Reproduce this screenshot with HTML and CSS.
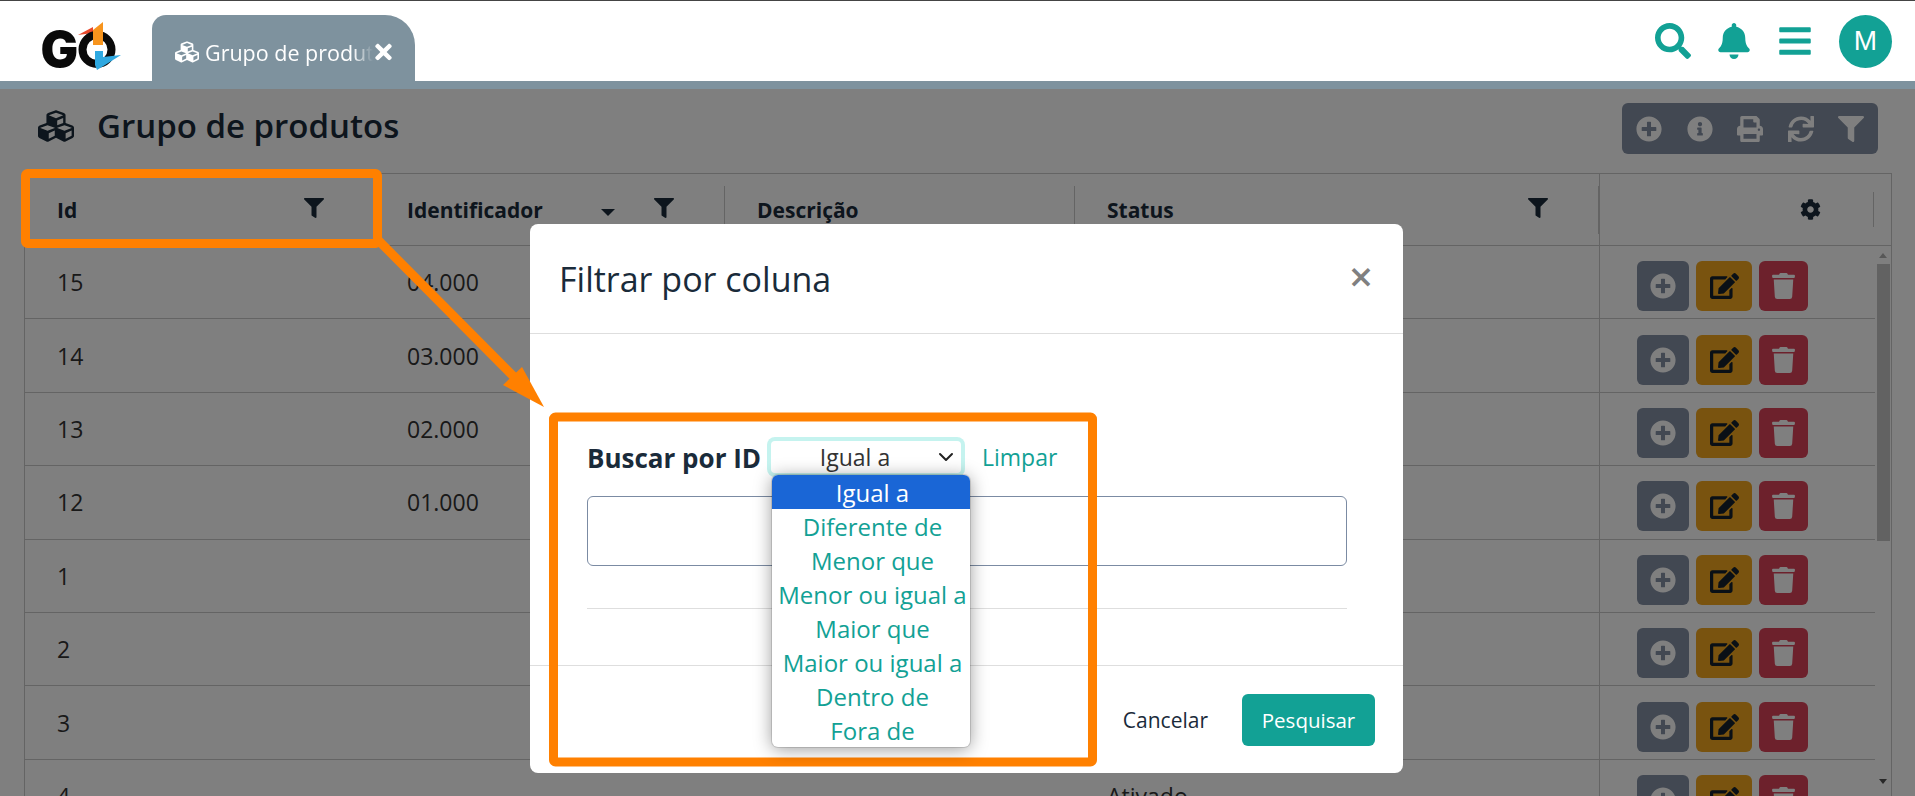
FILE: index.html
```html
<!DOCTYPE html>
<html lang="pt-BR">
<head>
    <meta charset="UTF-8">
    <meta name="viewport" content="width=device-width, initial-scale=1.0">
    <title>Grupo de produtos</title>
    <link rel="stylesheet" href="styles.css">
</head>
<body>
    <svg class="sprite" xmlns="http://www.w3.org/2000/svg">
        <symbol id="i-cubes" viewBox="0 0 512 512"><path d="M488.6 250.2L392 214V105.5c0-15-9.3-28.4-23.4-33.7l-100-37.5c-8.1-3.1-17.1-3.1-25.3 0l-100 37.5c-14.1 5.3-23.4 18.7-23.4 33.7V214l-96.6 36.2C9.3 255.5 0 268.9 0 283.9V394c0 13.6 7.7 26.1 19.9 32.2l100 50c10.1 5.1 22.1 5.1 32.2 0l103.9-52 103.9 52c10.1 5.1 22.1 5.1 32.2 0l100-50c12.2-6.1 19.9-18.6 19.9-32.2V283.9c0-15-9.3-28.4-23.4-33.7zM358 214.8l-85 31.9v-68.2l85-37v73.3zM154 104.1l102-38.2 102 38.2v.6l-102 41.4-102-41.4v-.6zm84 291.1l-85 42.5v-79.1l85-38.8v75.4zm0-112l-102 41.4-102-41.4v-.6l102-38.2 102 38.2v.6zm240 112l-85 42.5v-79.1l85-38.8v75.4zm0-112l-102 41.4-102-41.4v-.6l102-38.2 102 38.2v.6z"/></symbol>
        <symbol id="i-search" viewBox="0 0 512 512"><path d="M505 442.7L405.3 343c-4.5-4.5-10.6-7-17-7H372c27.6-35.3 44-79.7 44-128C416 93.1 322.9 0 208 0S0 93.1 0 208s93.1 208 208 208c48.3 0 92.7-16.4 128-44v16.3c0 6.4 2.5 12.5 7 17l99.7 99.7c9.4 9.4 24.6 9.4 33.9 0l28.3-28.3c9.4-9.4 9.4-24.6.1-34zM208 336c-70.7 0-128-57.2-128-128 0-70.7 57.2-128 128-128 70.7 0 128 57.2 128 128 0 70.7-57.2 128-128 128z"/></symbol>
        <symbol id="i-bell" viewBox="0 0 448 512"><path d="M224 512c35.32 0 63.97-28.65 63.97-64H160.03c0 35.35 28.65 64 63.97 64zm215.39-149.71c-19.32-20.76-55.47-51.99-55.47-154.29 0-77.7-54.48-139.9-127.94-155.16V32c0-17.67-14.32-32-31.98-32s-31.98 14.33-31.98 32v20.84C118.56 68.1 64.08 130.3 64.08 208c0 102.3-36.15 133.53-55.47 154.29-6 6.45-8.66 14.16-8.61 21.71.11 16.4 12.98 32 32.1 32h383.8c19.12 0 32-15.6 32.1-32 .05-7.55-2.61-15.27-8.61-21.71z"/></symbol>
        <symbol id="i-bars" viewBox="0 0 448 512"><path d="M16 132h416c8.837 0 16-7.163 16-16V76c0-8.837-7.163-16-16-16H16C7.163 60 0 67.163 0 76v40c0 8.837 7.163 16 16 16zm0 160h416c8.837 0 16-7.163 16-16v-40c0-8.837-7.163-16-16-16H16c-8.837 0-16 7.163-16 16v40c0 8.837 7.163 16 16 16zm0 160h416c8.837 0 16-7.163 16-16v-40c0-8.837-7.163-16-16-16H16c-8.837 0-16 7.163-16 16v40c0 8.837 7.163 16 16 16z"/></symbol>
        <symbol id="i-plus" viewBox="0 0 512 512"><path d="M256 8C119 8 8 119 8 256s111 248 248 248 248-111 248-248S393 8 256 8zm144 276c0 6.6-5.4 12-12 12h-92v92c0 6.6-5.4 12-12 12h-56c-6.6 0-12-5.4-12-12v-92h-92c-6.6 0-12-5.4-12-12v-56c0-6.6 5.4-12 12-12h92v-92c0-6.6 5.4-12 12-12h56c6.6 0 12 5.4 12 12v92h92c6.6 0 12 5.4 12 12v56z"/></symbol>
        <symbol id="i-info" viewBox="0 0 512 512"><path d="M256 8C119.043 8 8 119.083 8 256c0 136.997 111.043 248 248 248s248-111.003 248-248C504 119.083 392.957 8 256 8zm0 110c23.196 0 42 18.804 42 42s-18.804 42-42 42-42-18.804-42-42 18.804-42 42-42zm56 254c0 6.627-5.373 12-12 12h-88c-6.627 0-12-5.373-12-12v-24c0-6.627 5.373-12 12-12h12v-64h-12c-6.627 0-12-5.373-12-12v-24c0-6.627 5.373-12 12-12h64c6.627 0 12 5.373 12 12v100h12c6.627 0 12 5.373 12 12v24z"/></symbol>
        <symbol id="i-print" viewBox="0 0 512 512"><path d="M448 192V77.25c0-8.49-3.37-16.62-9.37-22.63L393.37 9.37c-6-6-14.14-9.37-22.63-9.37H96C78.33 0 64 14.33 64 32v160c-35.35 0-64 28.65-64 64v112c0 8.84 7.16 16 16 16h48v96c0 17.67 14.33 32 32 32h320c17.67 0 32-14.33 32-32v-96h48c8.84 0 16-7.16 16-16V256c0-35.35-28.65-64-64-64zm-64 256H128v-96h256v96zm0-224H128V64h192v48c0 8.84 7.16 16 16 16h48v96zm48 72c-13.25 0-24-10.75-24-24 0-13.26 10.75-24 24-24s24 10.74 24 24c0 13.25-10.75 24-24 24z"/></symbol>
        <symbol id="i-sync" viewBox="0 0 512 512"><path d="M440.65 12.57l4 82.77A247.16 247.16 0 0 0 255.83 8C134.73 8 33.91 94.92 12.29 209.82A12 12 0 0 0 24.09 224h49.05a12 12 0 0 0 11.67-9.26 175.91 175.91 0 0 1 317-56.94l-101.46-4.86a12 12 0 0 0-12.57 12v47.41a12 12 0 0 0 12 12H500a12 12 0 0 0 12-12V12a12 12 0 0 0-12-12h-47.37a12 12 0 0 0-11.98 12.57zM255.83 432a175.61 175.61 0 0 1-146-77.8l101.8 4.87a12 12 0 0 0 12.57-12v-47.4a12 12 0 0 0-12-12H12a12 12 0 0 0-12 12V500a12 12 0 0 0 12 12h47.35a12 12 0 0 0 12-12.6l-4.15-82.57A247.17 247.17 0 0 0 255.83 504c121.11 0 221.93-86.92 243.55-201.82a12 12 0 0 0-11.8-14.18h-49.05a12 12 0 0 0-11.67 9.26A175.86 175.86 0 0 1 255.83 432z"/></symbol>
        <symbol id="i-filter" viewBox="0 0 512 512"><path d="M487.976 0H24.028C2.71 0-8.047 25.866 7.058 40.971L192 225.941V432c0 7.831 3.821 15.17 10.237 19.662l80 55.98C298.02 518.69 320 507.493 320 487.98V225.941l184.947-184.97C520.021 25.896 509.338 0 487.976 0z"/></symbol>
        <symbol id="i-cog" viewBox="0 0 512 512"><path d="M487.4 315.7l-42.6-24.6c4.3-23.2 4.3-47 0-70.2l42.6-24.6c4.9-2.8 7.1-8.6 5.5-14-11.1-35.6-30-67.8-54.7-94.6-3.8-4.1-10-5.1-14.8-2.3L380.8 110c-17.9-15.4-38.5-27.3-60.8-35.1V25.8c0-5.6-3.9-10.5-9.4-11.7-36.7-8.2-74.3-7.8-109.2 0-5.5 1.2-9.4 6.1-9.4 11.7V75c-22.2 7.9-42.8 19.8-60.8 35.1L88.7 85.5c-4.9-2.8-11-1.9-14.8 2.3-24.7 26.7-43.6 58.9-54.7 94.6-1.7 5.4.6 11.2 5.5 14L67.3 221c-4.3 23.2-4.3 47 0 70.2l-42.6 24.6c-4.9 2.8-7.1 8.6-5.5 14 11.1 35.6 30 67.8 54.7 94.6 3.8 4.1 10 5.1 14.8 2.3l42.6-24.6c17.9 15.4 38.5 27.3 60.8 35.1v49.2c0 5.6 3.9 10.5 9.4 11.7 36.7 8.2 74.3 7.8 109.2 0 5.5-1.2 9.4-6.1 9.4-11.7v-49.2c22.2-7.9 42.8-19.8 60.8-35.1l42.6 24.6c4.9 2.8 11 1.9 14.8-2.3 24.7-26.7 43.6-58.9 54.7-94.6 1.5-5.5-.7-11.3-5.6-14.1zM256 336c-44.1 0-80-35.9-80-80s35.9-80 80-80 80 35.9 80 80-35.9 80-80 80z"/></symbol>
        <symbol id="i-edit" viewBox="0 0 576 512"><path d="M402.6 83.2l90.2 90.2c3.8 3.8 3.8 10 0 13.8L274.4 405.6l-92.8 10.3c-12.4 1.4-22.9-9.1-21.5-21.5l10.3-92.8L388.8 83.2c3.8-3.8 10-3.8 13.8 0zm162-22.9l-48.8-48.8c-15.2-15.2-39.9-15.2-55.2 0l-35.4 35.4c-3.8 3.8-3.8 10 0 13.8l90.2 90.2c3.8 3.8 10 3.8 13.8 0l35.4-35.4c15.2-15.3 15.2-40 0-55.2zM384 346.2V448H64V128h229.8c3.2 0 6.2-1.3 8.5-3.5l40-40c7.6-7.6 2.2-20.5-8.5-20.5H48C21.5 64 0 85.5 0 112v352c0 26.5 21.5 48 48 48h352c26.5 0 48-21.5 48-48V306.2c0-10.7-12.9-16-20.5-8.5l-40 40c-2.2 2.3-3.5 5.3-3.5 8.5z"/></symbol>
        <symbol id="i-trash" viewBox="0 0 448 512"><path d="M432 32H312l-9.4-18.7A24 24 0 0 0 281.1 0H166.8a23.72 23.72 0 0 0-21.4 13.3L136 32H16A16 16 0 0 0 0 48v32a16 16 0 0 0 16 16h416a16 16 0 0 0 16-16V48a16 16 0 0 0-16-16zM53.2 467a48 48 0 0 0 47.9 45h245.8a48 48 0 0 0 47.9-45L416 128H32z"/></symbol>
        <symbol id="i-times" viewBox="0 0 352 512"><path d="M242.72 256l100.07-100.07c12.28-12.28 12.28-32.19 0-44.48l-22.24-22.24c-12.28-12.28-32.19-12.28-44.48 0L176 189.28 75.93 89.21c-12.28-12.28-32.19-12.28-44.48 0L9.21 111.45c-12.28 12.28-12.28 32.19 0 44.48L109.28 256 9.21 356.07c-12.28 12.28-12.28 32.19 0 44.48l22.24 22.24c12.28 12.28 32.2 12.28 44.48 0L176 322.72l100.07 100.07c12.28 12.28 32.2 12.28 44.48 0l22.24-22.24c12.28-12.28 12.28-32.19 0-44.48L242.72 256z"/></symbol>
    </svg>

    <header class="topbar">
        <svg class="logo" viewBox="0 0 80 50" width="80" height="50">
            <text x="-1.5" y="44" class="logo-g">G</text>
            <path d="M36 12 L51 4 L51 10 Z" fill="#e8492c"/>
            <circle cx="55" cy="26.5" r="14.5" fill="none" stroke="#0a0a0a" stroke-width="8"/>
            <path d="M51 7 L61 -1 L61 22 L51 22 Z" fill="#f7941d"/>
            <path d="M53 28 L61 28 L61 34 L79 32 L55 47 L53 42 Z" fill="#2fa9e1"/>
        </svg>
        <div class="tab">
            <svg class="tab-icon"><use href="#i-cubes"/></svg>
            <span class="tab-label">Grupo de produtos</span>
            <svg class="tab-close"><use href="#i-times"/></svg>
        </div>
        <div class="topbar-icons">
            <svg class="top-search"><use href="#i-search"/></svg>
            <svg class="top-bell"><use href="#i-bell"/></svg>
            <svg class="top-bars"><use href="#i-bars"/></svg>
            <div class="avatar">M</div>
        </div>
    </header>
    <div class="stripe"></div>

    <main class="page">
        <div class="title-row">
            <svg class="title-icon"><use href="#i-cubes"/></svg>
            <h1>Grupo de produtos</h1>
            <div class="toolbar">
                <svg><use href="#i-plus"/></svg>
                <svg><use href="#i-info"/></svg>
                <svg><use href="#i-print"/></svg>
                <svg><use href="#i-sync"/></svg>
                <svg><use href="#i-filter"/></svg>
            </div>
        </div>

        <section class="grid-table">
            <div class="thead">
                <div class="th">Id <svg class="th-filter"><use href="#i-filter"/></svg></div>
                <div class="th">Identificador <span class="th-tools"><span class="caret"></span><svg class="th-filter"><use href="#i-filter"/></svg></span></div>
                <div class="th">Descrição</div>
                <div class="th">Status <svg class="th-filter"><use href="#i-filter"/></svg></div>
                <div class="th-actions"><div class="th-gear"><svg><use href="#i-cog"/></svg></div></div>
            </div>
            <div class="tbody">
                <div class="rows">
                    <div class="row"><span>15</span><span>04.000</span><span></span><span></span><div class="actions"><a class="btn btn-grey"><svg class="ic-plus"><use href="#i-plus"/></svg></a><a class="btn btn-amber"><svg class="ic-edit"><use href="#i-edit"/></svg></a><a class="btn btn-red"><svg class="ic-trash"><use href="#i-trash"/></svg></a></div></div>
                    <div class="row"><span>14</span><span>03.000</span><span></span><span></span><div class="actions"><a class="btn btn-grey"><svg class="ic-plus"><use href="#i-plus"/></svg></a><a class="btn btn-amber"><svg class="ic-edit"><use href="#i-edit"/></svg></a><a class="btn btn-red"><svg class="ic-trash"><use href="#i-trash"/></svg></a></div></div>
                    <div class="row"><span>13</span><span>02.000</span><span></span><span></span><div class="actions"><a class="btn btn-grey"><svg class="ic-plus"><use href="#i-plus"/></svg></a><a class="btn btn-amber"><svg class="ic-edit"><use href="#i-edit"/></svg></a><a class="btn btn-red"><svg class="ic-trash"><use href="#i-trash"/></svg></a></div></div>
                    <div class="row"><span>12</span><span>01.000</span><span></span><span></span><div class="actions"><a class="btn btn-grey"><svg class="ic-plus"><use href="#i-plus"/></svg></a><a class="btn btn-amber"><svg class="ic-edit"><use href="#i-edit"/></svg></a><a class="btn btn-red"><svg class="ic-trash"><use href="#i-trash"/></svg></a></div></div>
                    <div class="row"><span>1</span><span></span><span></span><span></span><div class="actions"><a class="btn btn-grey"><svg class="ic-plus"><use href="#i-plus"/></svg></a><a class="btn btn-amber"><svg class="ic-edit"><use href="#i-edit"/></svg></a><a class="btn btn-red"><svg class="ic-trash"><use href="#i-trash"/></svg></a></div></div>
                    <div class="row"><span>2</span><span></span><span></span><span></span><div class="actions"><a class="btn btn-grey"><svg class="ic-plus"><use href="#i-plus"/></svg></a><a class="btn btn-amber"><svg class="ic-edit"><use href="#i-edit"/></svg></a><a class="btn btn-red"><svg class="ic-trash"><use href="#i-trash"/></svg></a></div></div>
                    <div class="row"><span>3</span><span></span><span></span><span></span><div class="actions"><a class="btn btn-grey"><svg class="ic-plus"><use href="#i-plus"/></svg></a><a class="btn btn-amber"><svg class="ic-edit"><use href="#i-edit"/></svg></a><a class="btn btn-red"><svg class="ic-trash"><use href="#i-trash"/></svg></a></div></div>
                    <div class="row"><span>4</span><span></span><span></span><span>Ativado</span><div class="actions"><a class="btn btn-grey"><svg class="ic-plus"><use href="#i-plus"/></svg></a><a class="btn btn-amber"><svg class="ic-edit"><use href="#i-edit"/></svg></a><a class="btn btn-red"><svg class="ic-trash"><use href="#i-trash"/></svg></a></div></div>
                </div>
                <div class="scrollbar">
                    <span class="arrow-up"></span>
                    <span class="thumb"></span>
                    <span class="arrow-down"></span>
                </div>
            </div>
        </section>
        <div class="backdrop"></div>
    </main>

    <div class="modal">
        <div class="modal-header">
            <h2>Filtrar por coluna</h2>
            <button class="close">&times;</button>
        </div>
        <div class="modal-body">
            <div class="filter-row">
                <label>Buscar por ID</label>
                <div class="select-wrap">
                    <div class="select">
                        <span>Igual a</span>
                        <svg viewBox="0 0 16 16" width="16" height="16"><path d="M2 5l6 6 6-6" fill="none" stroke="#222" stroke-width="2" stroke-linecap="round" stroke-linejoin="round"/></svg>
                    </div>
                    <ul class="dropdown">
                        <li class="selected">Igual a</li>
                        <li>Diferente de</li>
                        <li>Menor que</li>
                        <li>Menor ou igual a</li>
                        <li>Maior que</li>
                        <li>Maior ou igual a</li>
                        <li>Dentro de</li>
                        <li>Fora de</li>
                    </ul>
                </div>
                <a class="clear">Limpar</a>
            </div>
            <input class="search-input" type="text">
            <hr>
        </div>
        <div class="modal-footer">
            <a class="cancel">Cancelar</a>
            <button class="submit">Pesquisar</button>
        </div>
    </div>

    <svg class="annotations" viewBox="0 0 1915 796" width="1915" height="796">
        <rect x="25.5" y="173.5" width="352" height="70" rx="2"/>
        <rect x="553.5" y="417" width="539" height="345" rx="2"/>
        <path class="arrow-line" d="M378 240 L528 391"/>
        <path class="arrow-head" d="M544 407 L522 367 L503 385 Z"/>
    </svg>
</body>
</html>
```

FILE: styles.css
```css
:root {
    --teal: #12a195;
    --orange: #ff8000;
    --dark-text: #1a2b3a;
    --line: #c9c9c9;
}

* {
    box-sizing: border-box;
}

html, body {
    height: 796px;
    overflow: hidden;
}

body {
    margin: 0;
    font-family: "Open Sans", "Noto Sans", sans-serif;
    color: #333;
    background-color: #fff;
    position: relative;
}

.sprite {
    display: none;
}

svg {
    fill: currentColor;
    display: block;
}

/* top bar */
.topbar {
    height: 81px;
    border-top: 1px solid #444;
    display: flex;
    align-items: flex-end;
    background-color: #fff;
    padding-left: 42px;
}

.logo {
    margin-bottom: 8px;
    overflow: visible;
}

.logo-g {
    font-family: "Inter", sans-serif;
    font-weight: 900;
    font-size: 50px;
    fill: #0a0a0a;
}

.tab {
    margin-left: 30px;
    width: 263px;
    height: 66px;
    background-color: #7e929e;
    border-radius: 14px 30px 0 0;
    color: #fff;
    display: flex;
    align-items: center;
    padding-left: 23px;
    padding-top: 8px;
}

.tab-icon {
    width: 24px;
    height: 24px;
    flex: none;
}

.tab-label {
    margin-left: 6px;
    width: 168px;
    overflow: hidden;
    white-space: nowrap;
    font-size: 21.5px;
    -webkit-mask-image: linear-gradient(to right, #000 88%, transparent 100%);
    mask-image: linear-gradient(to right, #000 88%, transparent 100%);
}

.tab-close {
    width: 17px;
    height: 24px;
    margin-left: 2px;
    flex: none;
}

.topbar-icons {
    margin-left: auto;
    margin-right: 23px;
    height: 80px;
    display: flex;
    align-items: center;
    color: var(--teal);
}

.top-search {
    width: 36px;
    height: 36px;
}

.top-bell {
    width: 32px;
    height: 36px;
    margin-left: 27px;
}

.top-bars {
    width: 32px;
    height: 36px;
    margin-left: 29px;
}

.avatar {
    width: 53px;
    height: 53px;
    margin-left: 28px;
    border-radius: 50%;
    background-color: var(--teal);
    color: #fff;
    font-family: "Liberation Sans", sans-serif;
    font-size: 28px;
    display: flex;
    align-items: center;
    justify-content: center;
}

.stripe {
    height: 8px;
    background-color: #7e929e;
}

/* page behind the modal */
.page {
    position: relative;
    height: 707px;
    overflow: hidden;
    padding: 0 24px;
}

.backdrop {
    position: absolute;
    inset: 0;
    background-color: rgba(0, 0, 0, 0.5);
}

.title-row {
    display: flex;
    align-items: center;
    padding: 14px 13px 19px 14px;
}

.title-icon {
    width: 36px;
    height: 36px;
    margin-bottom: 6px;
    color: var(--dark-text);
}

h1 {
    margin: 0 0 6px 23px;
    font-size: 33px;
    font-weight: 600;
    color: var(--dark-text);
}

.toolbar {
    margin-left: auto;
    width: 256px;
    height: 51px;
    background-color: #8490a4;
    border-radius: 6px;
    display: flex;
    align-items: center;
    justify-content: space-between;
    padding: 0 14px;
    color: #fff;
}

.toolbar svg {
    width: 26px;
    height: 26px;
}

.grid-table {
    border: solid var(--line);
    border-width: 1px 1px 0 1px;
    width: 1868px;
}

.thead,
.row {
    display: grid;
    grid-template-columns: 350px 350px 350px 524px 1fr;
}

.thead {
    height: 72px;
    border-bottom: 1px solid var(--line);
    font-size: 21px;
    font-weight: 700;
    color: var(--dark-text);
}

.th {
    align-self: center;
    height: 48px;
    padding: 0 50px 0 32px;
    display: flex;
    align-items: center;
    justify-content: space-between;
    border-right: 1px solid var(--line);
}

.th-filter {
    width: 20px;
    height: 20px;
    margin-top: -4px;
}

.th-tools {
    display: flex;
    align-items: center;
    gap: 39px;
}

.caret {
    width: 0;
    height: 0;
    border: 7px solid transparent;
    border-top: 7px solid var(--dark-text);
    border-bottom: 0;
    margin-top: 6px;
}

.th-actions {
    border-left: 1px solid var(--line);
    display: flex;
    align-items: center;
    justify-content: flex-end;
}

.th-gear {
    height: 35px;
    margin-right: 17px;
    padding-right: 52px;
    border-right: 1px solid var(--line);
    display: flex;
    align-items: center;
}

.th-gear svg {
    width: 21px;
    height: 21px;
    margin-top: -1px;
}

.tbody {
    display: flex;
}

.rows {
    flex: 1;
    min-width: 0;
}

.row {
    height: 73.4px;
    align-items: center;
    border-bottom: 1px solid var(--line);
    font-size: 23px;
    color: #333;
}

.row > span {
    padding-left: 32px;
}

.actions {
    height: 100%;
    border-left: 1px solid var(--line);
    padding: 8px 0 0 37px;
    display: flex;
    align-items: center;
    gap: 7px;
}

.btn {
    height: 50px;
    border-radius: 6px;
    display: flex;
    align-items: center;
    justify-content: center;
}

.btn-grey {
    width: 52px;
    background-color: #8490a4;
    color: #fff;
}

.btn-amber {
    width: 56px;
    background-color: #f2a61e;
    color: #14202c;
}

.btn-red {
    width: 49px;
    background-color: #da4258;
    color: #fff;
}

.ic-plus {
    width: 26px;
    height: 26px;
}

.ic-edit {
    width: 29px;
    height: 26px;
}

.ic-trash {
    width: 23px;
    height: 26px;
}

.scrollbar {
    width: 16px;
    height: 540px;
    display: flex;
    flex-direction: column;
    align-items: center;
    padding-top: 7px;
}

.arrow-up {
    width: 0;
    height: 0;
    border: 4px solid transparent;
    border-bottom: 5px solid #b0b0b0;
    border-top: 0;
}

.thumb {
    width: 13px;
    height: 277px;
    margin-top: 6px;
    background-color: #c4c4c4;
}

.arrow-down {
    width: 0;
    height: 0;
    margin-top: auto;
    margin-bottom: 2px;
    border: 4px solid transparent;
    border-top: 5px solid #505050;
    border-bottom: 0;
}

/* modal */
.modal {
    position: absolute;
    left: 530px;
    top: 224px;
    width: 873px;
    height: 549px;
    background-color: #fff;
    border-radius: 8px;
    display: flex;
    flex-direction: column;
}

.modal-header {
    height: 110px;
    border-bottom: 1px solid #dedede;
    padding: 0 30px 0 29px;
    display: flex;
    align-items: center;
    justify-content: space-between;
}

h2 {
    margin: 0;
    font-size: 34px;
    font-weight: 500;
    color: var(--dark-text);
}

.close {
    border: 0;
    background: none;
    padding: 0;
    font-family: "Open Sans", sans-serif;
    font-size: 42px;
    line-height: 1;
    font-weight: 600;
    color: #808080;
    margin-top: -6px;
}

.modal-body {
    flex: 1;
    padding: 107px 56px 0 57px;
}

.filter-row {
    display: flex;
    align-items: center;
    height: 32px;
}

.filter-row label {
    font-size: 26px;
    font-weight: 700;
    color: var(--dark-text);
    width: 184px;
    white-space: nowrap;
    padding-top: 1px;
}

.select-wrap {
    position: relative;
}

.select {
    width: 190px;
    height: 32px;
    border-radius: 4px;
    box-shadow: 0 0 0 4px #c5f3ef;
    display: flex;
    align-items: center;
    justify-content: center;
    padding-right: 22px;
    position: relative;
    font-size: 23px;
    color: #333;
}

.select svg {
    position: absolute;
    right: 7px;
    top: 8px;
}

.dropdown {
    position: absolute;
    left: 1px;
    top: 34px;
    width: 198px;
    margin: 0;
    padding: 0;
    list-style: none;
    background-color: #fff;
    border-radius: 6px;
    overflow: hidden;
    box-shadow: 0 0 0 1px rgba(0, 0, 0, 0.12), 0 2px 18px rgba(0, 0, 0, 0.4);
    z-index: 2;
}

.dropdown li {
    height: 34px;
    line-height: 36px;
    padding-left: 3px;
    text-align: center;
    font-size: 24px;
    color: var(--teal);
    white-space: nowrap;
}

.dropdown li.selected {
    background-color: #1a66d6;
    color: #fff;
}

.clear {
    margin-left: 21px;
    color: var(--teal);
    font-size: 23px;
}

.search-input {
    display: block;
    width: 760px;
    height: 70px;
    margin-top: 23px;
    border: 1px solid #7b8ba3;
    border-radius: 6px;
}

hr {
    margin: 42px 0 0;
    border: 0;
    border-top: 1px solid #dedede;
}

.modal-footer {
    height: 108px;
    border-top: 1px solid #dedede;
    padding: 0 28px 0 0;
    display: flex;
    align-items: center;
    justify-content: flex-end;
}

.cancel {
    font-size: 21px;
    color: var(--dark-text);
    margin-right: 34px;
}

.submit {
    width: 133px;
    height: 52px;
    border: 0;
    border-radius: 6px;
    background-color: var(--teal);
    color: #fff;
    font-family: inherit;
    font-size: 20.5px;
}

/* orange callouts drawn over the screenshot */
.annotations {
    position: absolute;
    left: 0;
    top: 0;
    pointer-events: none;
}

.annotations rect {
    fill: none;
    stroke: var(--orange);
    stroke-width: 9;
}

.arrow-line {
    fill: none;
    stroke: var(--orange);
    stroke-width: 9;
}

.arrow-head {
    fill: var(--orange);
}
```
